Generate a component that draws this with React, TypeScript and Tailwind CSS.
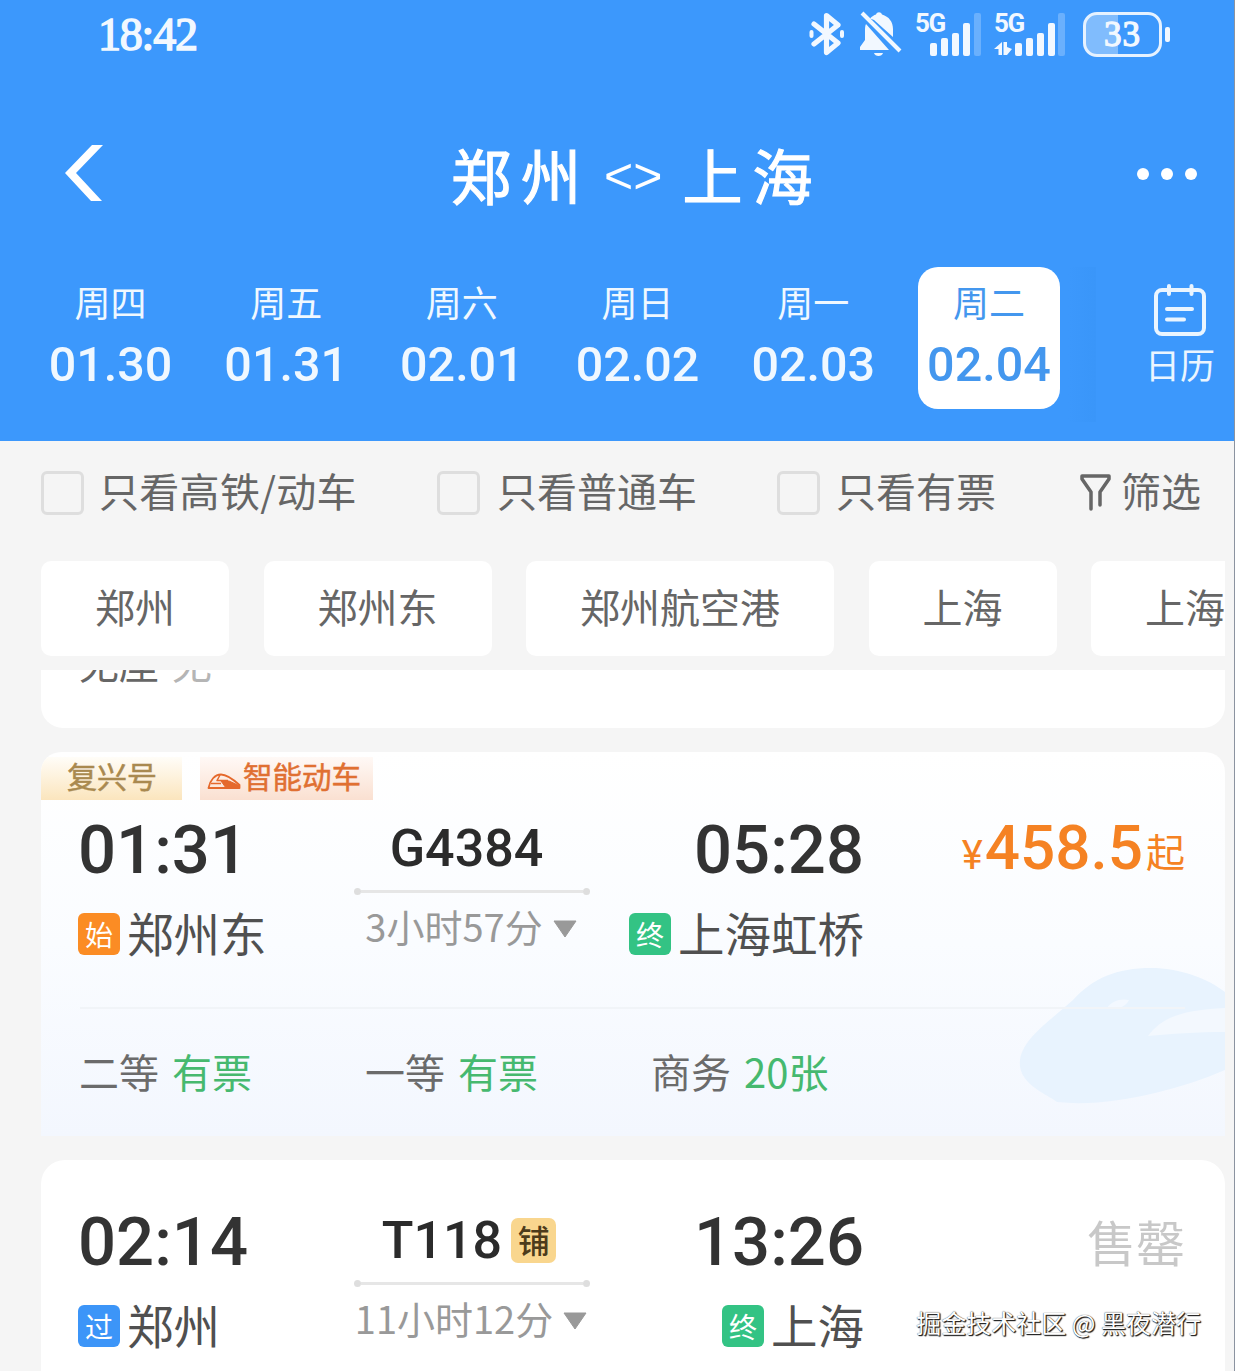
import { clsx } from "clsx";

const days = [
  { week: "周四", date: "01.30" },
  { week: "周五", date: "01.31" },
  { week: "周六", date: "02.01" },
  { week: "周日", date: "02.02" },
  { week: "周一", date: "02.03" },
  { week: "周二", date: "02.04", active: true },
];

const stations = ["郑州", "郑州东", "郑州航空港", "上海", "上海虹桥"];

const seats = [
  { name: "二等", left: "有票" },
  { name: "一等", left: "有票" },
  { name: "商务", left: "20张" },
];

function Bluetooth() {
  return (
    <svg width="36" height="46" viewBox="0 0 36 46" fill="none" stroke="#f2f8ff" strokeWidth="5.2" strokeLinejoin="round" strokeLinecap="round">
      <path d="M5 13L29 32L17.500 41.500V4.500L29 14L5 33" />
      <path d="M2.500 21v4M33 21v4" strokeWidth="4" />
    </svg>
  );
}

function BellOff() {
  return (
    <svg width="44" height="48" viewBox="0 0 44 48">
      <path
        d="M11 8.500C13 6.500 15 5 17 4.500C18 1.500 22 1.500 23 4.500C30 6.500 34 12 34 19V27L15 10ZM7 14C6 16 6 18 6 21V30L1 37V40H30Z"
        fill="#f2f8ff"
      />
      <path d="M15 43H24C23 47 16 47 15 43Z" fill="#f2f8ff" />
      <path d="M3 3L41 41" stroke="#f2f8ff" strokeWidth="4" />
    </svg>
  );
}

function Signal({ data = false }: { data?: boolean }) {
  return (
    <div className="relative">
      <span className="absolute left-0 top-0 font-[Roboto,sans-serif] text-[26px] font-bold leading-[26px] tracking-[-1.5px] text-[#f2f8ff]">5G</span>
      <svg width="72" height="48" viewBox="0 0 72 48" fill="#f2f8ff">
        {data && <path d="M8 32V45H4.500V39H0ZM9.500 32H13V37L18 39L13 45H9.500Z" />}
        <rect x={data ? 21 : 15} y="33" width="7" height="13" rx="2" />
        <rect x={data ? 32 : 26} y="28" width="7" height="18" rx="2" />
        <rect x={data ? 43 : 37} y="23" width="7" height="23" rx="2" />
        <rect x={data ? 54 : 48} y="13" width="7" height="33" rx="2" />
        <rect x={data ? 64 : 59} y="3" width="7" height="43" rx="2" opacity="0.25" />
      </svg>
    </div>
  );
}

function Battery() {
  return (
    <div className="flex items-center gap-[3px]">
      <div className="flex h-[45px] w-[79px] items-center justify-center rounded-[14px] border-[3.5px] border-[#e6f2ff] bg-linear-to-r from-white/35 from-[44%] to-transparent to-[44%] font-['Liberation_Serif',serif] text-[35px] leading-none tracking-[1px] text-[#f2f8ff] [-webkit-text-stroke:1.3px_#f2f8ff]">
        33
      </div>
      <div className="h-[15px] w-[5px] rounded-[2px] bg-[#f2f8ff]" />
    </div>
  );
}

function Calendar() {
  return (
    <svg width="54" height="54" viewBox="0 0 54 54" fill="none" stroke="#eaf5ff" strokeWidth="4" strokeLinecap="round">
      <rect x="3" y="7" width="48" height="44" rx="6" />
      <path d="M16 3v8M38.500 3v8M14 26h25M14 36.500h17" />
    </svg>
  );
}

function TrainMark() {
  return (
    <svg width="34" height="18" viewBox="0 0 34 18" fill="none" stroke="#e5692c" strokeWidth="1.800" strokeLinejoin="round">
      <path d="M1.500 16C3 8 8 2.500 14 2.500C20 2.500 28 9 32.500 13V16Z" />
      <path d="M14 9H22L32 13.500V16H19Z" fill="#e5692c" strokeWidth="1" />
      <path d="M4 11.500H14M13 3L10 8.500H21" strokeWidth="1.500" />
    </svg>
  );
}

function TrainBackdrop() {
  return (
    <svg className="absolute right-0 top-[214px]" width="210" height="142" viewBox="0 0 210 142">
      <path d="M5 94C8 72 36 54 58 34C78 12 102 2 136 2C164 2 192 12 210 26V104C166 123 96 142 42 136C32 128 2 118 5 94Z" fill="#e8f3fe" />
      <path d="M133 70C146 52 166 44 210 42V66C182 66 156 68 133 70Z" fill="#f3f8fe" />
      <path d="M92 42C96 35 106 32 114 34C110 42 100 44 92 42Z" fill="#f3f8ff" />
    </svg>
  );
}

type StopProps = { mark: string; color: string; name: string };

function Stop({ mark, color, name }: StopProps) {
  return (
    <div className="flex items-center gap-[7px] whitespace-nowrap text-[46.5px] leading-[48px] text-[#505050]">
      <span className={clsx("flex size-[42px] items-center justify-center rounded-[6px] text-[28px] leading-none text-white", color)}>
        <span className="-mt-px">{mark}</span>
      </span>
      <span className="-mt-[4px]">{name}</span>
    </div>
  );
}

type TripProps = {
  depart: string;
  arrive: string;
  code: string;
  sleeper?: boolean;
  duration: React.ReactNode;
  from: StopProps;
  to: StopProps;
  children: React.ReactNode;
};

function Trip({ depart, arrive, code, sleeper, duration, from, to, children }: TripProps) {
  return (
    <div className="grid grid-cols-[276px_236px_274px_1fr] pl-[37px] pr-[40px]">
      <div>
        <div className="pt-[2px] font-[Roboto,sans-serif] text-[67px] font-medium leading-[70px] text-[#333]">{depart}</div>
        <div className="mt-[27px]">
          <Stop {...from} />
        </div>
      </div>
      <div className="flex flex-col items-center">
        <div className={clsx("flex h-[70px] items-center gap-[9px] font-[Roboto,sans-serif] text-[52px] font-medium leading-none text-[#2b2b2b]", sleeper ? "pr-[6px]" : "pr-[11px]")}>
          <span className="pt-px">{code}</span>
          {sleeper && (
            <span className="flex size-[45px] items-center justify-center rounded-[7px] bg-[#f9d68e] font-['Noto_Sans_CJK_SC',sans-serif] text-[32px] leading-none text-[#4d3b1b]">
              <span className="-mt-[2px]">铺</span>
            </span>
          )}
        </div>
        <div className="mt-[5px] flex w-full items-center">
          <i className="size-[7px] rounded-full bg-[#dedede]" />
          <i className="h-[3px] flex-1 bg-[#e6e6e6]" />
          <i className="size-[7px] rounded-full bg-[#dedede]" />
        </div>
        <div className="mt-[9px] flex items-center gap-[10px] whitespace-nowrap pr-[2px] text-[38px] leading-[44px] text-[#999]">
          {duration}
          <svg width="24" height="18" viewBox="0 0 24 18" className="mt-[5px]">
            <path d="M1 1H23L12 17Z" fill="#999" stroke="#999" strokeLinejoin="round" />
          </svg>
        </div>
      </div>
      <div className="flex flex-col items-end">
        <div className="pt-[2px] font-[Roboto,sans-serif] text-[67px] font-medium leading-[70px] text-[#333]">{arrive}</div>
        <div className="mt-[27px]">
          <Stop {...to} />
        </div>
      </div>
      <div className="flex h-[70px] items-center justify-end whitespace-nowrap">{children}</div>
    </div>
  );
}

export default function App() {
  return (
    <div className="relative h-[1371px] w-[1235px] overflow-hidden border-r border-[#8b93a0] bg-[#f5f5f5] font-['Noto_Sans_CJK_SC',sans-serif]">
      <header className="h-[441px] bg-[#3c98fc] text-white">
        <div className="flex h-[68px] items-center pl-[98px] pr-[64px]">
          <span className="pt-[2px] font-['Liberation_Serif',serif] text-[46px] leading-none tracking-[-1.2px] text-[#f2f8ff] [-webkit-text-stroke:1.5px_#f2f8ff]">18:42</span>
          <div className="ml-auto flex items-center">
            <Bluetooth />
            <div className="ml-[14px]"><BellOff /></div>
            <div className="ml-[12px]"><Signal /></div>
            <div className="ml-[7px]"><Signal data /></div>
            <div className="ml-[17px]"><Battery /></div>
          </div>
        </div>

        <div className="flex h-[214px] items-center pl-[63px] pr-[37px]">
          <svg width="42" height="58" viewBox="0 0 42 58" className="-mt-[4px]">
            <path d="M29 1H40L13 29L39 57H28L2 29Z" fill="white" />
          </svg>
          <h1 className="ml-[346px] flex items-center pt-px text-[60px] leading-none">
            <span className="-mt-[4px] tracking-[10px] [-webkit-text-stroke:1.2px_white]">郑州</span>
            <span className="ml-[13px] mr-[20px] font-['Liberation_Sans',sans-serif] text-[50px] leading-none">&lt;&gt;</span>
            <span className="-mt-[4px] tracking-[10px] [-webkit-text-stroke:1.2px_white]">上海</span>
          </h1>
          <div className="-mt-[2px] ml-auto flex gap-[12px]">
            <i className="size-[12px] rounded-full bg-white" />
            <i className="size-[12px] rounded-full bg-white" />
            <i className="size-[12px] rounded-full bg-white" />
          </div>
        </div>

        <div className="-mt-[15px] flex">
          <div className="flex gap-[33.7px] pl-[39.5px]">
            {days.map((day) => (
              <div
                key={day.date}
                className={clsx(
                  "flex h-[142px] w-[142px] flex-col items-center rounded-[20px] pt-[15px]",
                  day.active ? "bg-white text-[#4497ee]" : "text-[#f0f8ff]"
                )}
              >
                <span className="text-[36px] leading-[38px]">{day.week}</span>
                <span className="mt-[17px] font-[Roboto,sans-serif] text-[48.5px] font-medium leading-[56px]">{day.date}</span>
              </div>
            ))}
          </div>
          <div className="ml-[8px] h-[155px] w-[28px] bg-linear-to-r from-transparent to-[#338ff0]/25" />
          <div className="ml-auto flex flex-col items-center pr-[19px] pt-[16px] text-[#eaf5ff]">
            <Calendar />
            <span className="mt-[8px] text-[35px] leading-[38px]">日历</span>
          </div>
        </div>
      </header>

      <div className="flex h-[120px] items-center pb-[17px] pl-[41px] text-[40px] leading-none text-[#666]">
        <span className="h-[44px] w-[43px] rounded-[6px] border-[3px] border-[#dedede]" />
        <span className="-mt-[6px] ml-[15px] w-[338px] tracking-[0.3px]">只看高铁/动车</span>
        <span className="h-[44px] w-[43px] rounded-[6px] border-[3px] border-[#dedede]" />
        <span className="-mt-[6px] ml-[17px] w-[280px]">只看普通车</span>
        <span className="h-[44px] w-[43px] rounded-[6px] border-[3px] border-[#dedede]" />
        <span className="-mt-[6px] ml-[16px] w-[244px]">只看有票</span>
        <svg width="31" height="38" viewBox="0 0 31 38" fill="none" stroke="#666" strokeWidth="3.500" strokeLinejoin="round" strokeLinecap="round" className="-mt-px">
          <path d="M11 36V19L2 6V3H29V6L20 19V32" />
        </svg>
        <span className="-mt-[6px] ml-[10px]">筛选</span>
      </div>

      <div className="mr-[9px] flex gap-[34.5px] overflow-hidden pl-[41px]">
        {stations.map((name) => (
          <div key={name} className="h-[95px] shrink-0 rounded-[10px] bg-white px-[54px] text-[40px] leading-[91px] text-[#666]">
            {name}
          </div>
        ))}
      </div>

      <main className="mt-[14px] flex flex-col gap-6 pl-[41px] pr-[9px]">
        <div className="h-[58px] overflow-hidden rounded-b-[22px] bg-white pl-[38px]">
          <div className="-mt-[28px] flex gap-[13px] text-[40px] leading-[40px] text-[#666]">
            无座 <span className="text-[#b5b5b5]">无</span>
          </div>
        </div>

        <div className="relative h-[384px] overflow-hidden rounded-t-[20px] bg-linear-to-b from-white via-[#fafcff] to-[#f3f7fe]">
          <TrainBackdrop />
          <div className="relative">
            <div className="flex gap-[18px] pt-[5px] leading-[36px]">
              <span className="h-[43px] w-[141px] bg-linear-to-b from-[#fffdf8] to-[#fbe5bd] pl-[26px] text-[30px] text-[#a9894f] [-webkit-text-stroke:0.5px_#a9894f]">复兴号</span>
              <span className="flex h-[43px] w-[173px] items-center gap-[2px] bg-linear-to-b from-[#fff9f6] to-[#fae0d1] pl-[7px] text-[29.5px] text-[#e07032] [-webkit-text-stroke:0.5px_#e07032]">
                <span className="pt-[5px]"><TrainMark /></span>
                <span className="-mt-[7px] whitespace-nowrap">智能动车</span>
              </span>
            </div>
            <div className="mt-[13px]">
              <Trip
                depart="01:31"
                arrive="05:28"
                code="G4384"
                duration="3小时57分"
                from={{ mark: "始", color: "bg-[#fb8c24]", name: "郑州东" }}
                to={{ mark: "终", color: "bg-[#33c384]", name: "上海虹桥" }}
              >
                <div className="flex items-baseline text-[#f58223]">
                  <span className="mr-[2px] font-[Roboto,sans-serif] text-[40px] leading-none">¥</span>
                  <span className="font-[Roboto,sans-serif] text-[62px] font-medium leading-none">458.5</span>
                  <span className="relative -top-[2px] ml-[3px] text-[39px] leading-none">起</span>
                </div>
              </Trip>
            </div>
            <div className="ml-[39px] mr-[40px] mt-[51px] h-[2px] bg-[#f1f4f8]" />
            <div className="mt-[38px] flex pl-[38px] text-[40px] leading-[48px] text-[#6b6b6b]">
              {seats.map((seat) => (
                <div key={seat.name} className="flex w-[286px] gap-[13px]">
                  {seat.name}
                  <span className="text-[#46b96f]">{seat.left}</span>
                </div>
              ))}
            </div>
          </div>
        </div>

        <div className="h-[240px] rounded-t-[24px] bg-white pt-[45px]">
          <Trip
            depart="02:14"
            arrive="13:26"
            code="T118"
            sleeper
            duration="11小时12分"
            from={{ mark: "过", color: "bg-[#3c95f8]", name: "郑州" }}
            to={{ mark: "终", color: "bg-[#33c384]", name: "上海" }}
          >
            <span className="text-[49px] leading-none text-[#c8c8c8]">售罄</span>
          </Trip>
        </div>
      </main>

      <div className="absolute right-[33px] top-[1305px] whitespace-nowrap text-[25px] leading-[34px] text-white [text-shadow:1px_1px_1px_#222,0_0_1px_#222,1px_1px_1px_#444]">
        掘金技术社区 @ 黑夜潜行
      </div>
    </div>
  );
}
